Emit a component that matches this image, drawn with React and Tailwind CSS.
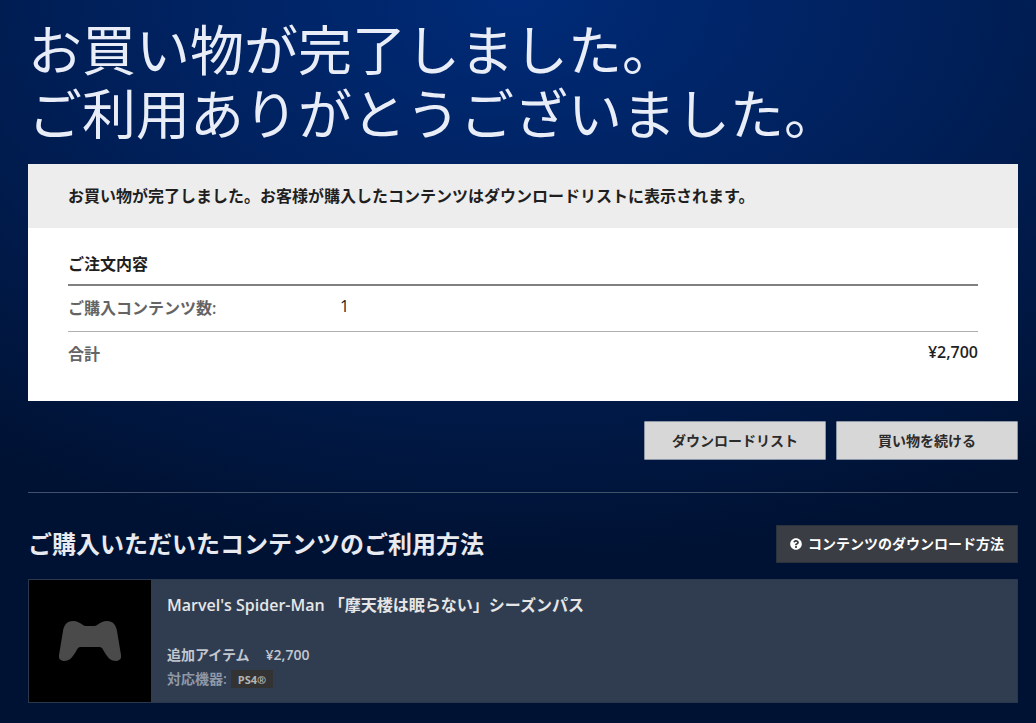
import { FaQuestionCircle } from 'react-icons/fa';

const order = { count: 1, total: '¥2,700' };

const items = [
  {
    id: 1,
    title: "Marvel's Spider-Man 「摩天楼は眠らない」シーズンパス",
    type: '追加アイテム',
    price: '¥2,700',
    platform: 'PS4®',
  },
];

function ControllerIcon() {
  return (
    <svg width="62" height="42" viewBox="0 0 62 42" fill="#4a4a4a" aria-hidden="true">
      <path d="M14 1C18 1 21 3 24 5Q25 6 27 6H35Q37 6 38 5C41 3 44 1 48 1C54 1 57 5 58 11L62 35C63 39 60 41 57 41C52 41 49 38 46 33L43 28Q42 27 40 27H22Q20 27 19 28L16 33C13 38 10 41 5 41C2 41-1 39 0 35L4 11C5 5 8 1 14 1Z" />
    </svg>
  );
}

function ActionButton({ children }) {
  return (
    <button
      type="button"
      className="w-[182px] h-[39px] rounded-[1px] border border-[#8b95a5] bg-[#d7d7d7] text-sm font-semibold text-[#2b2b2b] cursor-pointer hover:bg-white"
    >
      {children}
    </button>
  );
}

function OrderSummary() {
  return (
    <section className="bg-white text-[#1f1f1f]">
      <p className="bg-[#ededed] px-10 py-5 leading-6 font-semibold">
        お買い物が完了しました。お客様が購入したコンテンツはダウンロードリストに表示されます。
      </p>
      <div className="px-10 pt-6 pb-6">
        <h2 className="leading-6 font-semibold pb-2">ご注文内容</h2>
        <table className="w-full border-collapse border-t-2 border-[#808080]">
          <tbody>
            <tr className="h-[46px] border-b border-[#b0b0b0]">
              <th scope="row" className="w-[272px] text-left font-semibold text-[#646464]">ご購入コンテンツ数:</th>
              <td className="pb-1 font-medium">{order.count}</td>
            </tr>
            <tr className="h-[46px]">
              <th scope="row" className="text-left font-semibold text-[#646464]">合計</th>
              <td className="pb-1 text-right font-semibold">{order.total}</td>
            </tr>
          </tbody>
        </table>
      </div>
    </section>
  );
}

function PurchasedItem({ item }) {
  return (
    <li className="flex border border-[#2b384b] bg-[#303d51]">
      <div className="flex w-[122px] h-[122px] shrink-0 items-center justify-center bg-black">
        <ControllerIcon />
      </div>
      <div className="px-4 pt-[13px] font-semibold">
        <h3 className="leading-6 text-[#e6e6e6]">{item.title}</h3>
        <p className="mt-[26px] flex gap-4 text-sm leading-6 text-[#c3c8d0]">
          <span>{item.type}</span>
          <span>{item.price}</span>
        </p>
        <p className="flex items-center gap-1 text-sm leading-6 text-[#8f98a6]">
          対応機器:
          <span className="bg-[#333333] px-[7px] pt-[2px] text-[11px] leading-4 font-bold text-[#b5b5b5]">{item.platform}</span>
        </p>
      </div>
    </li>
  );
}

export default function App() {
  return (
    <div
      lang="ja"
      className="min-h-screen bg-[#001233] bg-[radial-gradient(ellipse_900px_560px_at_50%_0,#002b78_0%,#001f58_50%,#001233_100%)] pl-7 pr-[18px] pt-[18px] pb-5 font-['Open_Sans','Noto_Sans_CJK_JP',sans-serif]"
    >
      <h1 className="text-[54px] leading-[64px] font-normal text-[#e8edf8]">
        お買い物が完了しました。
        <br />
        ご利用ありがとうございました。
      </h1>

      <main className="mt-[18px]">
        <OrderSummary />

        <div className="mt-5 flex flex-wrap justify-end gap-[10px]">
          <ActionButton>ダウンロードリスト</ActionButton>
          <ActionButton>買い物を続ける</ActionButton>
        </div>

        <section className="mt-8 border-t border-[#42506a] pt-8">
          <div className="flex flex-wrap items-center justify-between gap-4">
            <h2 className="text-2xl leading-8 font-semibold text-[#e8eaf0]">ご購入いただいたコンテンツのご利用方法</h2>
            <a
              href="#download-help"
              className="flex h-[38px] items-center gap-[6px] border border-[#2c323c] bg-[#3a3e44] px-[13px] text-sm font-semibold text-white hover:bg-[#4a4e54]"
            >
              <FaQuestionCircle size={12} aria-hidden="true" />
              コンテンツのダウンロード方法
            </a>
          </div>

          <ul className="mt-4">
            {items.map((item) => (
              <PurchasedItem key={item.id} item={item} />
            ))}
          </ul>
        </section>
      </main>
    </div>
  );
}
